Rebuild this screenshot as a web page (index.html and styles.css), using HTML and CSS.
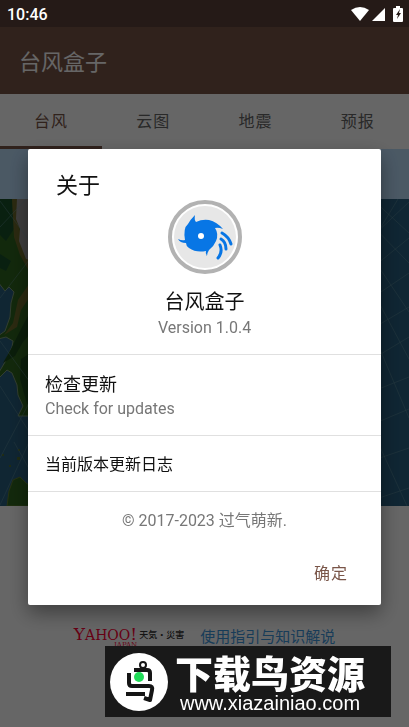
FILE: index.html
```html
<!DOCTYPE html>
<html lang="zh-CN">
<head>
<meta charset="utf-8">
<meta name="viewport" content="width=device-width, initial-scale=1">
<title>台风盒子</title>
<link rel="stylesheet" href="styles.css">
</head>
<body>
<div class="status">
  <span>10:46</span>
  <svg class="status-icons" width="54" height="17" viewBox="0 0 54 17" fill="#fff" aria-hidden="true">
    <path d="M0 4Q9-2 18 4L9 15Z"/>
    <path d="M21 15H34V2Z"/>
    <path fill-rule="evenodd" d="M45 0h4v2h2q1 0 1 1v12q0 1-1 1h-8q-1 0-1-1V3q0-1 1-1h2ZM49 3l-4 6h2l-1 4 4-6h-2Z"/>
  </svg>
</div>
<main class="app">
  <header class="toolbar"><h1>台风盒子</h1></header>
  <nav class="tabs">
    <a class="tab active" href="#typhoon">台风</a>
    <a class="tab" href="#cloud">云图</a>
    <a class="tab" href="#quake">地震</a>
    <a class="tab" href="#forecast">预报</a>
  </nav>
  <div class="notice"></div>
  <svg class="map" viewBox="0 0 409 307" preserveAspectRatio="none" aria-hidden="true">
    <rect width="409" height="307" fill="#285f80"/>
    <path fill="#2f661f" stroke="#7d9a78" stroke-width="1" d="M-2-2H60V217H18L23 207 18 196 17 186 12 174 7 171-2 180V175L5 163 12 148 13 142 6 138-2 140V137L5 132 10 118 11 104 14 93 9 88 5 92-2 83Z"/>
    <path fill="#18502a" d="M0 0H12L14 30 6 42 0 36ZM0 55 11 62 6 72 0 69Z"/>
    <path fill="#6d6a2a" d="M12 0H20L18 22 22 42 30 60V74L20 56 14 38ZM29 85 18 101 13 124 4 136 17 128 21 111 29 99Z"/>
    <path fill="#9b9a9a" d="M17 0H60V68L26 60 19 42 20 30 16 20Z"/>
    <path fill="#1b4a1a" d="M29 115 21 130 11 150 3 164 15 157 23 143 30 135ZM29 155 21 160 20 180 27 205 30 206Z"/>
    <path fill="#2f661f" stroke="#607c2f" d="M7 307 9 292 13 281 20 278 27 285H45V307Z"/>
    <path fill="#4e6d32" d="M17 258h3v3h-3zM2 255h2v2H2zM9 266h2v2H9zM18 250h2v2h-2z"/>
    <g fill="none" stroke="#74a0a9" stroke-opacity=".4">
      <path d="M0 2 40 56M0 28 31-5M0 99 36 52M0 142 35 190M0 187 40 250M0 259 38 187M0 306 35 230M14 243 32 275"/>
      <path d="M372 0 409 34M360 14 409 64M381 28 398 0M375 35 409 3M377 65 409 39M360 40 409 113M366 103 409 74M360 68 409 160M370 131 409 108M366 164 409 138M360 103 409 219M371 193 409 178M366 228 409 210M370 226 407 307M371 262 409 249M367 303 409 289"/>
    </g>
  </svg>
  <footer class="sources">
    <div class="provider">
      <div class="yahoo"><span class="yahoo-name"><b>Y</b>AHOO<b>!</b></span><span class="yahoo-country">JAPAN</span></div>
      <span class="provider-name">天気・災害</span>
    </div>
    <a class="guide" href="#guide">使用指引与知识解说</a>
  </footer>
</main>
<div class="scrim">
  <section class="dialog" role="dialog" aria-modal="true" aria-labelledby="about-title">
    <h2 id="about-title">关于</h2>
    <div class="about">
      <svg class="logo" width="74" height="74" viewBox="0 0 74 74" aria-hidden="true">
        <circle cx="37" cy="37" r="35" fill="#fff" stroke="#b2b2b2" stroke-width="4"/>
        <circle cx="37" cy="37" r="31" fill="#e7e7e7"/>
        <path fill="#0876e5" d="M27 15Q26 20 28 22Q34 19 41 20Q49 22 55 29Q50 27 47 28Q51 34 48 41Q46 46 41 50Q39 53 39 56Q37 53 38 51Q28 53 21 48Q18 46 18 43Q12 43 10 39Q14 41 17 40Q15 28 20 24Q22 20 27 15Z"/>
        <circle cx="33" cy="36" r="3" fill="#fff"/>
        <g fill="none" stroke="#0876e5" stroke-width="3" stroke-linecap="round"><path d="M54 33Q61 37 63 44"/><path d="M53 39Q58 42 58 49"/><path d="M52 45Q55 52 50 58"/></g>
      </svg>
      <strong class="app-name">台风盒子</strong>
      <span class="secondary">Version 1.0.4</span>
    </div>
    <button class="row update" type="button"><span class="row-title">检查更新</span><span class="secondary">Check for updates</span></button>
    <button class="row changelog" type="button">当前版本更新日志</button>
    <p class="copyright">© 2017-2023 过气萌新.</p>
    <div class="actions"><button class="confirm" type="button">确定</button></div>
  </section>
</div>
<aside class="watermark">
  <svg width="60" height="60" viewBox="0 0 60 60" aria-hidden="true">
    <circle cx="30" cy="30" r="29" fill="#fff"/>
    <g fill="none" stroke="#151515" stroke-width="4" stroke-linejoin="round">
      <circle cx="34" cy="13" r="3" stroke-width="2"/>
      <path d="M25 18H38Q41 18 41 21V29M20 21V31Q20 34 23 34H40Q44 34 43 38L41 48L35 46M17 42H36"/>
    </g>
    <circle cx="30" cy="25" r="5" fill="#20dc58"/>
  </svg>
  <div class="watermark-text"><strong>下载鸟资源</strong><span>www.xiazainiao.com</span></div>
</aside>
</body>
</html>
```
FILE: styles.css
```css
* { box-sizing: border-box; }
body {
  margin: 0;
  min-height: 100vh;
  display: flex;
  flex-direction: column;
  background: #fff;
  font-family: Roboto, "Noto Sans CJK SC", sans-serif;
  font-size: 16px;
  line-height: 24px;
}
a { color: inherit; text-decoration: none; }
button { border: 0; background: none; font: inherit; cursor: pointer; }
h1, h2, p { margin: 0; font-weight: 400; }

.status {
  position: relative;
  z-index: 2;
  height: 27px;
  padding: 2px 4px 0 7px;
  display: flex;
  align-items: center;
  justify-content: space-between;
  background: #251a17;
  color: #fff;
  font-weight: 500;
}
.app { flex: 1; display: flex; flex-direction: column; }
.toolbar {
  height: 67px;
  padding: 4px 19px 0;
  display: flex;
  align-items: center;
  background: #795548;
  color: #fff;
}
.toolbar h1 { font-size: 22px; line-height: 32px; }
.tabs { display: grid; grid-template-columns: repeat(4, 1fr); height: 55px; }
.tab {
  display: flex;
  align-items: center;
  justify-content: center;
  border-bottom: 3px solid transparent;
  padding-top: 4px;
  color: #666;
  letter-spacing: 1px;
}
.tab.active { border-color: #795548; color: #795548; }
.notice { height: 50px; background: #bbdefb; }
.map { display: block; width: 100%; height: 307px; }
.sources {
  display: flex;
  align-items: flex-start;
  justify-content: center;
  gap: 16px;
  padding-top: 122px;
}
.provider { display: flex; align-items: flex-start; gap: 2px; }
.yahoo {
  display: flex;
  flex-direction: column;
  align-items: flex-end;
  color: #f03;
  font-family: "DejaVu Serif", serif;
}
.yahoo-name { font-size: 14px; line-height: 13px; }
.yahoo-name b { font-size: 17px; line-height: 13px; font-weight: 400; }
.yahoo-country { font-size: 7px; line-height: 6px; }
.provider-name { font-family: "Noto Sans CJK JP", sans-serif; font-size: 9px; font-weight: 500; line-height: 14px; color: #333; }
.guide { font-size: 15px; line-height: 18px; color: #3c96dc; }

.scrim {
  position: fixed;
  inset: 0;
  padding: 27px 28px 0;
  display: flex;
  align-items: center;
  background: rgba(0, 0, 0, .6);
}
.dialog {
  width: 100%;
  background: #fff;
  border-radius: 2px;
  box-shadow: 0 8px 20px rgba(0, 0, 0, .4);
  color: #111;
}
.dialog h2 { padding: 22px 28px 0; font-size: 22px; line-height: 29px; }
.about {
  display: flex;
  flex-direction: column;
  align-items: center;
  padding-bottom: 14px;
}
.logo { margin-bottom: 15px; }
.app-name { font-size: 20px; line-height: 27px; font-weight: 400; }
.secondary { color: #777; line-height: 24px; }
.row {
  width: 100%;
  border-top: 1px solid #e0e0e0;
  padding: 3px 17px 0;
  display: flex;
  flex-direction: column;
  justify-content: center;
  align-items: flex-start;
  color: #111;
}
.update { height: 81px; }
.row-title { font-size: 18px; line-height: 24px; }
.changelog { height: 56px; }
.copyright {
  border-top: 1px solid #e0e0e0;
  padding: 17px 0 15px;
  text-align: center;
  color: #777;
}
.actions { display: flex; justify-content: flex-end; padding: 8px 17px 13px; }
.confirm { padding: 6px 16px; color: #795548; letter-spacing: 1px; }

.watermark {
  position: fixed;
  right: 18px;
  bottom: 10px;
  width: 286px;
  height: 71px;
  padding-left: 4px;
  display: flex;
  align-items: center;
  gap: 6px;
  background: #191919;
  color: #fff;
}
.watermark-text { display: flex; flex-direction: column; align-items: center; padding-top: 2px; }
.watermark strong { font-size: 38px; font-weight: 900; line-height: 40px; font-family: "Noto Sans CJK SC", sans-serif; }
.watermark span { font-family: "Liberation Sans", sans-serif; font-size: 20px; line-height: 22px; }
```
